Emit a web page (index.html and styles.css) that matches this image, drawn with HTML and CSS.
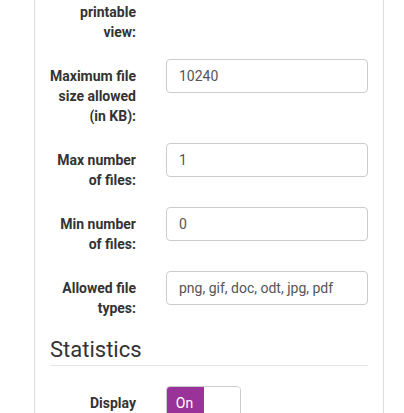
FILE: index.html
```html
<!DOCTYPE html>
<html lang="en">
<head>
  <meta charset="UTF-8">
  <title>Upload field settings</title>
<link rel="stylesheet" href="styles.css">
</head>
<body>
<div class="page">
  <form class="panel">
    <div class="row">
      <label class="lbl">Link to the form's printable view:</label>
      <div class="ctl">
        <div class="toggle"><span class="on">On</span><span class="off"></span></div>
      </div>
    </div>
    <div class="row">
      <label class="lbl" for="maxsize">Maximum file size allowed (in KB):</label>
      <div class="ctl"><input class="field" id="maxsize" type="text" value="10240"></div>
    </div>
    <div class="row">
      <label class="lbl" for="maxfiles">Max number of files:</label>
      <div class="ctl"><input class="field" id="maxfiles" type="text" value="1"></div>
    </div>
    <div class="row">
      <label class="lbl" for="minfiles">Min number of files:</label>
      <div class="ctl"><input class="field" id="minfiles" type="text" value="0"></div>
    </div>
    <div class="row">
      <label class="lbl" for="types">Allowed file types:</label>
      <div class="ctl"><input class="field" id="types" type="text" value="png, gif, doc, odt, jpg, pdf"></div>
    </div>
    <div class="legend">Statistics</div>
    <div class="row">
      <label class="lbl">Display</label>
      <div class="ctl">
        <div class="toggle"><span class="on">On</span><span class="off"></span></div>
      </div>
    </div>
  </form>
</div>
</body>
</html>
```

FILE: styles.css
```css
*{box-sizing:border-box;}
html,body{margin:0;padding:0;background:#fff;}
body{font-family:Roboto,"Liberation Sans",sans-serif;font-size:14px;line-height:20px;color:#333;}
.page{padding:0 20px 0 34px;}
.panel{border:1px solid #ddd;margin:-66px 0 0 0;padding:20px 0 40px;}
.row{display:flex;margin-bottom:17px;}
.lbl{width:116px;flex:none;padding:7px 15px 0;text-align:right;font-weight:700;}
.ctl{flex:1;padding:0 15px;}
.field{display:block;width:100%;height:34px;padding:6px 12px;font:14px/20px Roboto,"Liberation Sans",sans-serif;color:#555;border:1px solid #ccc;border-radius:4px;background:#fff;}
.legend{margin:0 15px 20px;font-size:22px;line-height:30px;color:#333;border-bottom:1px solid #e5e5e5;}
.toggle{display:flex;width:75px;height:34px;border:1px solid #ccc;border-radius:4px;overflow:hidden;}
.toggle .on{width:37px;background:#993399;color:#fff;text-align:center;line-height:32px;padding-right:2px;}
.toggle .off{flex:1;background:#fff;}
```
